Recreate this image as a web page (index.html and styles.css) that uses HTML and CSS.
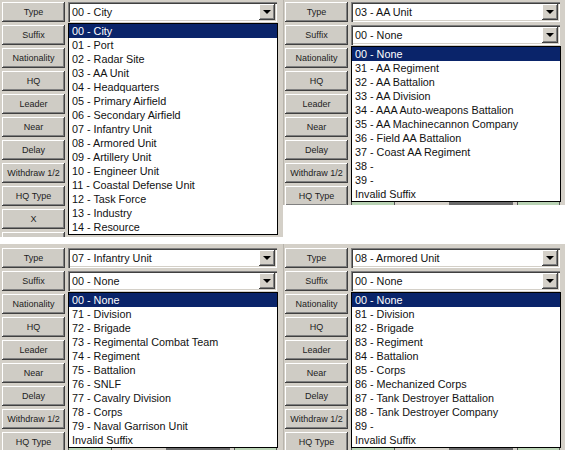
FILE: index.html
```html
<!DOCTYPE html>
<html lang="en">
<head>
    <meta charset="UTF-8">
    <title>Unit Type and Suffix Lists</title>
    <link rel="stylesheet" href="styles.css">
</head>
<body>
<div class="sheet">

    <!-- Type list open -->
    <section class="panel panel-tall">
        <div class="buttons">
            <span class="btn">Type</span>
            <span class="btn">Suffix</span>
            <span class="btn">Nationality</span>
            <span class="btn">HQ</span>
            <span class="btn">Leader</span>
            <span class="btn">Near</span>
            <span class="btn">Delay</span>
            <span class="btn">Withdraw 1/2</span>
            <span class="btn">HQ Type</span>
            <span class="btn">X</span>
            <span class="btn"></span>
        </div>
        <div class="fields">
            <div class="combo"><span class="value">00 - City</span><span class="arrow"></span></div>
            <ul class="list">
                <li class="selected">00 - City</li>
                <li>01 - Port</li>
                <li>02 - Radar Site</li>
                <li>03 - AA Unit</li>
                <li>04 - Headquarters</li>
                <li>05 - Primary Airfield</li>
                <li>06 - Secondary Airfield</li>
                <li>07 - Infantry Unit</li>
                <li>08 - Armored Unit</li>
                <li>09 - Artillery Unit</li>
                <li>10 - Engineer Unit</li>
                <li>11 - Coastal Defense Unit</li>
                <li>12 - Task Force</li>
                <li>13 - Industry</li>
                <li>14 - Resource</li>
            </ul>
        </div>
    </section>

    <!-- AA unit suffixes -->
    <section class="panel panel-short">
        <div class="buttons">
            <span class="btn">Type</span>
            <span class="btn">Suffix</span>
            <span class="btn">Nationality</span>
            <span class="btn">HQ</span>
            <span class="btn">Leader</span>
            <span class="btn">Near</span>
            <span class="btn">Delay</span>
            <span class="btn">Withdraw 1/2</span>
            <span class="btn">HQ Type</span>
        </div>
        <div class="fields">
            <div class="combo"><span class="value">03 - AA Unit</span><span class="arrow"></span></div>
            <div class="combo"><span class="value">00 - None</span><span class="arrow"></span></div>
            <ul class="list">
                <li class="selected">00 - None</li>
                <li>31 - AA Regiment</li>
                <li>32 - AA Battalion</li>
                <li>33 - AA Division</li>
                <li>34 - AAA Auto-weapons Battalion</li>
                <li>35 - AA Machinecannon Company</li>
                <li>36 - Field AA Battalion</li>
                <li>37 - Coast AA Regiment</li>
                <li>38 -</li>
                <li>39 -</li>
                <li>Invalid Suffix</li>
            </ul>
            <div class="under">
                <span class="tab green"></span><span class="tab gap"></span><span class="tab dark"></span><span class="tab green"></span>
            </div>
        </div>
    </section>

    <!-- Infantry suffixes -->
    <section class="panel panel-bottom">
        <div class="buttons">
            <span class="btn">Type</span>
            <span class="btn">Suffix</span>
            <span class="btn">Nationality</span>
            <span class="btn">HQ</span>
            <span class="btn">Leader</span>
            <span class="btn">Near</span>
            <span class="btn">Delay</span>
            <span class="btn">Withdraw 1/2</span>
            <span class="btn">HQ Type</span>
        </div>
        <div class="fields">
            <div class="combo"><span class="value">07 - Infantry Unit</span><span class="arrow"></span></div>
            <div class="combo"><span class="value">00 - None</span><span class="arrow"></span></div>
            <ul class="list">
                <li class="selected">00 - None</li>
                <li>71 - Division</li>
                <li>72 - Brigade</li>
                <li>73 - Regimental Combat Team</li>
                <li>74 - Regiment</li>
                <li>75 - Battalion</li>
                <li>76 - SNLF</li>
                <li>77 - Cavalry Division</li>
                <li>78 - Corps</li>
                <li>79 - Naval Garrison Unit</li>
                <li>Invalid Suffix</li>
            </ul>
            <div class="under">
                <span class="tab green"></span><span class="tab gap"></span><span class="tab dark"></span><span class="tab green"></span>
            </div>
        </div>
    </section>

    <!-- Armored suffixes -->
    <section class="panel panel-bottom">
        <div class="buttons">
            <span class="btn">Type</span>
            <span class="btn">Suffix</span>
            <span class="btn">Nationality</span>
            <span class="btn">HQ</span>
            <span class="btn">Leader</span>
            <span class="btn">Near</span>
            <span class="btn">Delay</span>
            <span class="btn">Withdraw 1/2</span>
            <span class="btn">HQ Type</span>
        </div>
        <div class="fields">
            <div class="combo"><span class="value">08 - Armored Unit</span><span class="arrow"></span></div>
            <div class="combo"><span class="value">00 - None</span><span class="arrow"></span></div>
            <ul class="list">
                <li class="selected">00 - None</li>
                <li>81 - Division</li>
                <li>82 - Brigade</li>
                <li>83 - Regiment</li>
                <li>84 - Battalion</li>
                <li>85 - Corps</li>
                <li>86 - Mechanized Corps</li>
                <li>87 - Tank Destroyer Battalion</li>
                <li>88 - Tank Destroyer Company</li>
                <li>89 -</li>
                <li>Invalid Suffix</li>
            </ul>
            <div class="under">
                <span class="tab green"></span><span class="tab gap"></span><span class="tab dark"></span><span class="tab green"></span>
            </div>
        </div>
    </section>

</div>
</body>
</html>
```

FILE: styles.css
```css
body {
    margin: 0;
    background: #fff;
    font-family: 'Liberation Sans', Arial, sans-serif;
    color: #111;
}
.sheet {
    display: grid;
    grid-template-columns: 283px 282px;
    grid-template-rows: 237px 206px;
    row-gap: 7px;
    width: 565px;
    height: 450px;
    overflow: hidden;
}

/* Panels */
.panel {
    display: flex;
    gap: 3px;
    padding: 2px 0 0 2px;
    background: #d4d0c8;
    overflow: hidden;
    box-sizing: border-box;
}
.panel-tall { height: 237px; }
.panel-short {
    height: 205px;
    align-self: start;
    border-left: 1px solid #b8b4ac;
    padding-left: 1px;
}
.panel-bottom { height: 206px; padding-top: 4px; }
.panel-bottom + .panel-bottom { border-left: 1px solid #b8b4ac; padding-left: 1px; }

/* Left column of buttons */
.buttons {
    display: flex;
    flex-direction: column;
    gap: 3px;
    width: 63px;
    flex-shrink: 0;
}
.btn {
    display: block;
    height: 20px;
    line-height: 20px;
    text-align: center;
    font-size: 9px;
    color: #222;
    background: #cfccc5;
    box-shadow: inset -1px -1px #404040, inset 1px 1px #fff, inset -2px -2px #808080;
    flex-shrink: 0;
}

/* Combo boxes and drop lists */
.fields {
    display: flex;
    flex-direction: column;
    width: 209px;
    flex-shrink: 0;
}
.combo {
    display: flex;
    align-items: center;
    height: 20px;
    margin-bottom: 3px;
    background: #fff;
    box-shadow: inset 1px 1px #808080, inset 2px 2px #404040, inset -1px -1px #fff, inset -2px -2px #d4d0c8;
    box-sizing: border-box;
    padding: 2px;
}
.value {
    flex: 1;
    padding-left: 2px;
    font-size: 10.8px;
}
.arrow {
    position: relative;
    width: 16px;
    height: 16px;
    background: #d4d0c8;
    box-shadow: inset -1px -1px #404040, inset 1px 1px #fff, inset -2px -2px #808080;
}
.arrow::after {
    content: "";
    position: absolute;
    left: 4px;
    top: 6px;
    border-left: 4px solid transparent;
    border-right: 4px solid transparent;
    border-top: 4px solid #000;
}
.list {
    list-style: none;
    margin: -2px 0 0;
    padding: 0;
    background: #fff;
    border: 1px solid #000;
    width: 210px;
    box-sizing: border-box;
}
.list li {
    height: 14px;
    line-height: 14px;
    padding-left: 3px;
    font-size: 10.8px;
    white-space: nowrap;
}
.list li.selected {
    background: #0a246a;
    color: #fff;
}

/* Edges of the controls peeking out below the lists */
.under {
    display: flex;
    height: 4px;
}
.tab { height: 4px; }
.tab.green { width: 44px; background: #b9d3b4; border: 1px solid #555; border-top: 0; box-sizing: border-box; }
.tab.gap { width: 54px; background: #d4d0c8; }
.tab.dark { width: 64px; background: #6b6b6b; margin-right: 4px; }
.tab.green:last-child { width: 43px; }
```
